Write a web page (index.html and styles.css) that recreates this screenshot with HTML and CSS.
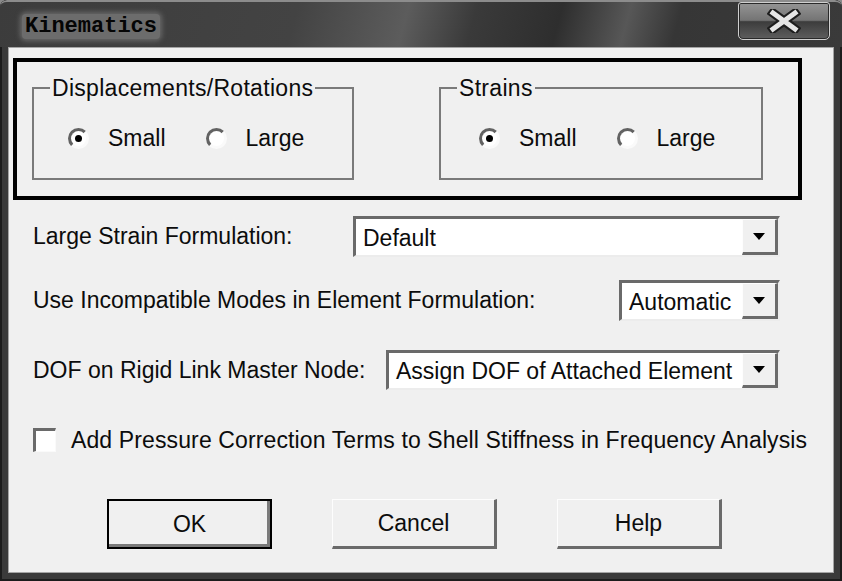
FILE: index.html
```html
<!DOCTYPE html>
<html lang="en">
<head>
  <meta charset="UTF-8">
  <title>Kinematics</title>
  <link rel="stylesheet" href="styles.css">
</head>
<body>
  <div class="window">
    <div class="titlebar">
      <span class="title">Kinematics</span>
      <button class="close-btn" title="Close">
        <svg width="34" height="24" viewBox="0 0 34 24">
          <path d="M6 4 L28 20 M28 4 L6 20" stroke="#1e1e1e" stroke-width="9" stroke-linecap="square"/>
          <path d="M6 4 L28 20 M28 4 L6 20" stroke="#e6e6e6" stroke-width="5" stroke-linecap="square"/>
        </svg>
      </button>
    </div>

    <div class="client">
      <!-- Kinematics options -->
      <div class="kin-box">
        <fieldset class="group group-disp">
          <legend>Displacements/Rotations</legend>
          <div class="radios">
            <label class="opt"><span class="radio checked"></span>Small</label>
            <label class="opt"><span class="radio"></span>Large</label>
          </div>
        </fieldset>
        <fieldset class="group group-strain">
          <legend>Strains</legend>
          <div class="radios">
            <label class="opt"><span class="radio checked"></span>Small</label>
            <label class="opt"><span class="radio"></span>Large</label>
          </div>
        </fieldset>
      </div>

      <div class="row row-1">
        <span class="label">Large Strain Formulation:</span>
        <div class="combo combo-default"><span class="value">Default</span><span class="drop"></span></div>
      </div>

      <div class="row row-2">
        <span class="label">Use Incompatible Modes in Element Formulation:</span>
        <div class="combo combo-auto"><span class="value">Automatic</span><span class="drop"></span></div>
      </div>

      <div class="row row-3">
        <span class="label">DOF on Rigid Link Master Node:</span>
        <div class="combo combo-assign"><span class="value">Assign DOF of Attached Element</span><span class="drop"></span></div>
      </div>

      <label class="check-row"><span class="checkbox"></span>Add Pressure Correction Terms to Shell Stiffness in Frequency Analysis</label>

      <div class="buttons">
        <button class="btn btn-default">OK</button>
        <button class="btn">Cancel</button>
        <button class="btn">Help</button>
      </div>
    </div>
  </div>
</body>
</html>
```

FILE: styles.css
```css
* {
  box-sizing: border-box;
}
body {
  margin: 0;
  background: #8a8a8a;
  font-family: "Liberation Sans", Arial, sans-serif;
  color: #0c0c0c;
}
.window {
  width: 842px;
  height: 581px;
  display: flex;
  flex-direction: column;
  padding: 0 8px 8px 8px;
  background: #3a3a3a;
  border-radius: 7px 7px 0 0;
  box-shadow: inset 0 0 0 2px #1c1c1c;
  overflow: hidden;
}

/* Title bar */
.titlebar {
  height: 47px;
  flex: none;
  display: flex;
  justify-content: space-between;
  align-items: flex-start;
  margin: 0 -8px;
  padding: 0 12px 0 22px;
  border-top: 2px solid #8c8c8c;
  border-radius: 7px 7px 0 0;
  background: linear-gradient(105deg, #3c3c3c 0%, #434343 35%, #5c5c5c 48%, #3a3a3a 56%, #2e2e2e 66%, #575757 74%, #363636 80%, #3a3a3a 100%);
}
.title {
  margin-top: 12px;
  padding: 2px 3px 1px;
  font-family: "Liberation Mono", "Courier New", monospace;
  font-size: 22px;
  font-weight: bold;
  line-height: 22px;
  color: #050505;
  background: #6c6c6c;
  border-radius: 4px;
  box-shadow: 0 0 5px 2px #686868;
}
.close-btn {
  width: 92px;
  height: 38px;
  margin-top: 0;
  padding: 0;
  display: flex;
  align-items: center;
  justify-content: center;
  border: 1px solid #cfcfcf;
  border-radius: 3px 3px 5px 5px;
  background: linear-gradient(#959595 0%, #747474 48%, #3c3c3c 52%, #5e5e5e 100%);
  box-shadow: inset 0 0 0 1px #2a2a2a;
}

/* Client area */
.client {
  flex: 1;
  background: #f0f0f0;
  border: 1px solid #a4a4a4;
  font-size: 23px;
}
.kin-box {
  width: 789px;
  height: 142px;
  margin: 10px 0 0 4px;
  padding: 13px 0 0 15px;
  border: 4px solid #000;
  display: flex;
  align-items: flex-start;
  gap: 85px;
}
.group {
  margin: 0;
  padding: 0 0 0 16px;
  height: 105px;
  min-width: 0;
  border: 2px solid #7a7a7a;
}
.group-disp {
  width: 322px;
}
.group-strain {
  width: 324px;
}
.group legend {
  padding: 0 2px;
  line-height: 26px;
  letter-spacing: 0.3px;
}
.radios {
  display: flex;
  gap: 40px;
  margin-top: 24px;
}
.group-disp .radios {
  margin-left: 18px;
}
.group-strain .radios {
  margin-left: 22px;
}
.opt {
  display: flex;
  align-items: center;
  gap: 19px;
  height: 26px;
}
.radio {
  width: 21px;
  height: 21px;
  border-radius: 50%;
  border: 3px solid;
  border-color: #626262 #fafafa #fafafa #626262;
  background: #fff;
  display: flex;
  align-items: center;
  justify-content: center;
}
.radio.checked::after {
  content: "";
  width: 7px;
  height: 7px;
  border-radius: 50%;
  background: #000;
}

/* Combo rows */
.row {
  display: flex;
  align-items: center;
  width: 747px;
  margin-left: 24px;
}
.row-1 {
  margin-top: 16px;
}
.row-2 {
  margin-top: 23px;
}
.row-3 {
  margin-top: 29px;
}
.label {
  white-space: nowrap;
}
.combo {
  height: 41px;
  margin-left: auto;
  display: flex;
  background: #fff;
  border-style: solid;
  border-width: 3px 2px 2px 3px;
  border-color: #6a6a6a #ececec #ececec #6a6a6a;
}
.row-3 .combo {
  height: 40px;
}
.combo-default {
  width: 427px;
}
.combo-auto {
  width: 161px;
}
.combo-assign {
  width: 394px;
}
.value {
  flex: 1;
  padding: 2px 0 0 7px;
  display: flex;
  align-items: center;
  white-space: nowrap;
  overflow: hidden;
}
.drop {
  width: 36px;
  flex: none;
  display: flex;
  align-items: center;
  justify-content: center;
  background: #f0f0f0;
  border-style: solid;
  border-width: 1px 3px 3px 1px;
  border-color: #fdfdfd #6a6a6a #6a6a6a #fdfdfd;
}
.drop::after {
  content: "";
  border-left: 6px solid transparent;
  border-right: 6px solid transparent;
  border-top: 7px solid #000;
}

/* Checkbox */
.check-row {
  display: flex;
  align-items: center;
  gap: 15px;
  height: 26px;
  margin: 37px 0 0 24px;
  letter-spacing: 0.12px;
}
.checkbox {
  width: 23px;
  height: 24px;
  background: #fff;
  border-style: solid;
  border-width: 3px 1px 1px 3px;
  border-color: #6a6a6a #fafafa #fafafa #6a6a6a;
}

/* Buttons */
.buttons {
  display: flex;
  gap: 60px;
  margin: 46px 0 0 98px;
}
.btn {
  width: 165px;
  height: 50px;
  padding: 0;
  font-family: inherit;
  font-size: 23px;
  color: #0c0c0c;
  background: #f0f0f0;
  border-style: solid;
  border-width: 1px 3px 3px 1px;
  border-color: #fdfdfd #6a6a6a #6a6a6a #fdfdfd;
}
.btn-default {
  border: 2px solid #000;
  box-shadow: inset -3px -3px 0 #7a7a7a;
}
```
